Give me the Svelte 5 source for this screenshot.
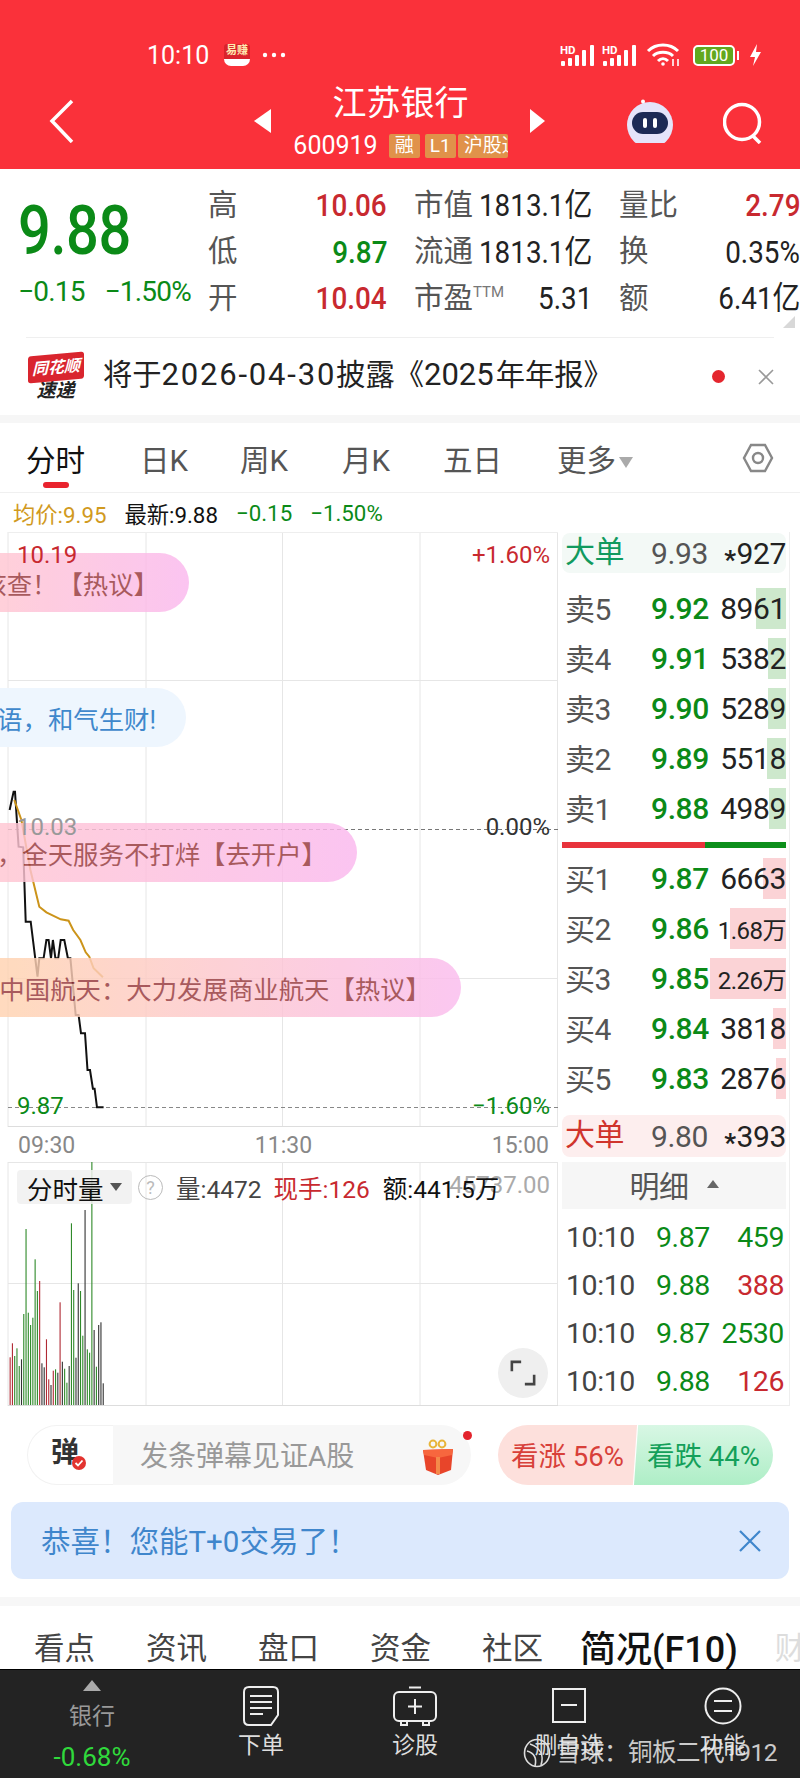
<script lang="ts">
  const stats = [
    { label: "高", value: "10.06", cls: "up" },
    { label: "市值", value: "1813.1亿", cls: "" },
    { label: "量比", value: "2.79", cls: "up" },
    { label: "低", value: "9.87", cls: "down" },
    { label: "流通", value: "1813.1亿", cls: "" },
    { label: "换", value: "0.35%", cls: "" },
    { label: "开", value: "10.04", cls: "up" },
    { label: "市盈", sup: "TTM", value: "5.31", cls: "" },
    { label: "额", value: "6.41亿", cls: "" },
  ];

  const sells = [
    { label: "卖5", price: "9.92", vol: "8961", bar: 30 },
    { label: "卖4", price: "9.91", vol: "5382", bar: 18 },
    { label: "卖3", price: "9.90", vol: "5289", bar: 18 },
    { label: "卖2", price: "9.89", vol: "5518", bar: 19 },
    { label: "卖1", price: "9.88", vol: "4989", bar: 17 },
  ];
  const buys = [
    { label: "买1", price: "9.87", vol: "6663", bar: 23 },
    { label: "买2", price: "9.86", vol: "1.68万", bar: 56, small: true },
    { label: "买3", price: "9.85", vol: "2.26万", bar: 76, small: true },
    { label: "买4", price: "9.84", vol: "3818", bar: 13 },
    { label: "买5", price: "9.83", vol: "2876", bar: 10 },
  ];
  const ticks = [
    { price: "9.87", vol: "459", cls: "down" },
    { price: "9.88", vol: "388", cls: "up" },
    { price: "9.87", vol: "2530", cls: "down" },
    { price: "9.88", vol: "126", cls: "up" },
  ];

  // screen coordinates of the intraday lines, the svg viewBox starts at y=532
  const priceLine =
    "9.6,810 13.6,791.7 15,791.7 18.6,846.7 23.2,847.3 25.7,921.7 30.7,921.7 37.5,976.7 39.3,958.3 43.6,958.3 46.4,940 48.6,940 51,958.3 52.9,940 55.4,958.3 58.2,958.3 60.7,940 64.3,940 67.9,958.3 70.4,958.3 75.7,1015 78.6,1015 81,1033.3 85,1033.3 87.5,1070 90,1070 92.9,1088.7 94.6,1088.7 97,1107.3 103.6,1107.3";
  const avgLine =
    "14.3,800 21.4,820 30.4,870 39.3,906.7 46.4,912.3 60.7,919.3 68.6,920.7 73.2,930 80.4,940 85.7,952.3 89.3,956.7 93.6,968.3 102.9,977.3";

  const gridX = [8, 146, 282.5, 420, 557.5];

  // r = red, g = green, d = dark
  const volBars: [number, string][] = [
    [47.7, "r"], [61.7, "r"], [49, "g"], [56.7, "g"], [39, "g"], [45.7, "d"], [91, "g"], [176, "g"],
    [92.3, "g"], [80, "g"], [87.3, "g"], [145.7, "g"], [114, "g"], [124, "r"], [41.7, "d"], [37.7, "d"],
    [65.7, "r"], [25.7, "r"], [20, "d"], [34.3, "r"], [35.7, "g"], [32.3, "d"], [102.7, "r"], [43.3, "d"],
    [36.3, "g"], [22.3, "g"], [39, "d"], [181.7, "g"], [115, "g"], [47.3, "d"], [121.7, "d"], [114, "g"],
    [69.3, "g"], [195, "d"], [55.7, "g"], [52.3, "g"], [243, "g"], [75, "d"], [38.3, "g"], [80, "d"],
    [82.7, "d"], [21.7, "d"],
  ];
  const barColor: Record<string, string> = { r: "#b02a34", g: "#2f8a2a", d: "#333" };

  const bottomTabs = ["看点", "资讯", "盘口", "资金", "社区"];
</script>

<div class="page">
  <header class="top">
    <div class="status">
      <span class="clock">10:10</span>
      <span class="app-icon"><span>易赚</span></span>
      <svg class="dots" width="24" height="6" viewBox="0 0 24 6" fill="#fff">
        <circle cx="3" cy="3" r="2.2" /><circle cx="12" cy="3" r="2.2" /><circle cx="21" cy="3" r="2.2" />
      </svg>
      <span class="status-right">
        {#each [0, 1] as s (s)}
          <svg class="signal" width="36" height="23" viewBox="0 0 36 23">
            <text x="0" y="10" font-size="11.5" font-weight="700" fill="#fff" font-family="Roboto">HD</text>
            <rect x="1" y="17" width="4" height="5" rx="1" fill="#fff" />
            <rect x="8" y="14" width="4" height="8" rx="1" fill="#fff" />
            <rect x="15" y="11" width="4" height="11" rx="1" fill="#fff" />
            <rect x="22" y="6" width="4" height="16" rx="1" fill="#fff" />
            <rect x="30" y="1" width="4" height="21" rx="1" fill="#fff" />
          </svg>
        {/each}
        <svg width="36" height="24" viewBox="0 0 36 24" fill="none" stroke="#fff" stroke-width="3" class="wifi">
          <path d="M2 8 C10 0 24 0 32 8" />
          <path d="M7 13 C12 8 22 8 27 13" />
          <path d="M12 18 C15 15 19 15 22 18" />
          <circle cx="17" cy="21" r="1.8" fill="#fff" stroke="none" />
          <path d="M27 23 V16 M32 16 V23" stroke-width="1.6" />
        </svg>
        <span class="battery">100</span>
        <svg width="13" height="22" viewBox="0 0 13 22" fill="#fff" class="bolt">
          <path d="M8 0 L1 13 L6 13 L4 22 L12 8 L7 8 Z" />
        </svg>
      </span>
    </div>
    <div class="nav">
      <div class="nav-left">
        <svg width="26" height="44" viewBox="0 0 26 44" fill="none" stroke="#fff" stroke-width="3.5">
          <path d="M23 2 L3 22 L23 43" />
        </svg>
      </div>
      <div class="nav-center">
        <span class="arrow-l"></span>
        <div class="stock">
          <div class="stock-name">江苏银行</div>
          <div class="stock-code">
            <span>600919</span>
            <span class="tag">融</span>
            <span class="tag">L1</span>
            <span class="tag tag-cut">沪股通</span>
          </div>
        </div>
        <span class="arrow-r"></span>
      </div>
      <div class="nav-right">
        <svg width="48" height="44" viewBox="0 0 48 44">
          <circle cx="17" cy="2.5" r="2" fill="#fff" />
          <path d="M17 3 L20 9" stroke="#fff" stroke-width="2" />
          <circle cx="24" cy="26" r="23" fill="#e4e4fa" />
          <rect x="6" y="13" width="36" height="22" rx="11" fill="#1c2a56" />
          <rect x="17" y="19" width="4" height="10" rx="2" fill="#fff" />
          <rect x="27" y="19" width="4" height="10" rx="2" fill="#fff" />
        </svg>
        <svg class="search" width="40" height="42" viewBox="0 0 40 42" fill="none" stroke="#fff" stroke-width="3.5">
          <circle cx="19" cy="20" r="17.5" />
          <path d="M30 34 L37 41" />
        </svg>
      </div>
    </div>
  </header>

  <section class="quote">
    <div class="quote-main">
      <div class="last">9.88</div>
      <div class="change"><span>−0.15</span><span>−1.50%</span></div>
    </div>
    <div class="stats">
      {#each stats as s (s.label)}
        <div class="stat">
          <span class="stat-label">{s.label}{#if s.sup}<sup>{s.sup}</sup>{/if}</span>
          <span class="stat-value {s.cls}">{s.value}</span>
        </div>
      {/each}
    </div>
    <span class="corner"></span>
  </section>

  <section class="news">
    <div class="news-logo">
      <span class="logo-top">同花顺</span>
      <span class="logo-bottom">速递</span>
    </div>
    <div class="news-text">将于<span class="news-date">2026-04-30</span>披露《<span class="news-num">2025</span>年年报》</div>
    <span class="news-dot"></span>
    <svg class="news-close" width="16" height="16" viewBox="0 0 16 16" stroke="#999" stroke-width="1.6">
      <path d="M1 1 L15 15 M15 1 L1 15" />
    </svg>
  </section>

  <nav class="periods">
    <span class="period active">分时</span>
    <span class="period">日K</span>
    <span class="period">周K</span>
    <span class="period">月K</span>
    <span class="period">五日</span>
    <span class="period more">更多<i></i></span>
    <svg class="hex" width="32" height="30" viewBox="0 0 32 30" fill="none" stroke="#888" stroke-width="2.4">
      <path d="M9 2 H23 L30 15 L23 28 H9 L2 15 Z" />
      <circle cx="16" cy="15" r="5" />
    </svg>
  </nav>

  <div class="legend">
    <span class="avg">均价:9.95</span>
    <span>最新:9.88</span>
    <span class="down">−0.15</span>
    <span class="down">−1.50%</span>
  </div>

  <div class="market">
    <div class="charts">
      <div class="price-chart">
        <svg width="558" height="595" viewBox="0 532 558 595" class="layer">
          {#each gridX as x (x)}
            <line x1={x} x2={x} y1="532" y2="1127" stroke="#e6e6e6" />
          {/each}
          <line x1="8" x2="558" y1="532.5" y2="532.5" stroke="#eee" />
          <line x1="8" x2="558" y1="680.5" y2="680.5" stroke="#e6e6e6" />
          <line x1="8" x2="558" y1="978.5" y2="978.5" stroke="#e6e6e6" />
          <line x1="8" x2="558" y1="1126.5" y2="1126.5" stroke="#ddd" />
          <line x1="8" x2="558" y1="829.5" y2="829.5" stroke="#777" stroke-dasharray="4 3" />
          <line x1="8" x2="558" y1="1107.5" y2="1107.5" stroke="#888" stroke-dasharray="4 3" />
          <polyline points={priceLine} fill="none" stroke="#111" stroke-width="2" />
          <polyline points={avgLine} fill="none" stroke="#cc941a" stroke-width="2" />
        </svg>

        <div class="bubble b1"><span>被核查！【热议】</span></div>
        <div class="bubble b2"><span>善语，和气生财!</span></div>
        <div class="bubble b3"><span>开户，全天服务不打烊【去开户】</span></div>
        <div class="bubble b4"><span>中国航天：大力发展商业航天【热议】</span></div>
        <span class="axis-l up first">10.19</span>
        <span class="axis-r up first">+1.60%</span>
        <span class="axis-l mid">10.03</span>
        <span class="axis-r zero">0.00%</span>
        <span class="axis-l down low">9.87</span>
        <span class="axis-r down low">−1.60%</span>
      </div>

      <div class="times"><span>09:30</span><span>11:30</span><span>15:00</span></div>

      <div class="vol-chart">
        <svg width="558" height="244" viewBox="0 1162 558 244" class="layer">
          {#each gridX as x (x)}
            <line x1={x} x2={x} y1="1162" y2="1406" stroke="#e6e6e6" />
          {/each}
          <line x1="8" x2="558" y1="1162.5" y2="1162.5" stroke="#e6e6e6" />
          <line x1="8" x2="558" y1="1283.5" y2="1283.5" stroke="#e6e6e6" />
          <line x1="8" x2="558" y1="1405.5" y2="1405.5" stroke="#ddd" />
          {#each volBars as [h, c], i (i)}
            <rect x={9.6 + i * 2.27} y={1405 - h} width="1.1" height={h} fill={barColor[c]} />
          {/each}
        </svg>
        <span class="vol-max">45737.00</span>
        <div class="vol-head">
          <span class="vol-chip">分时量<i></i></span>
          <span class="help">?</span>
          <span class="vol-a">量:4472</span>
          <span class="vol-b up">现手:126</span>
          <span class="vol-c">额:441.5万</span>
        </div>
        <div class="expand">
          <svg width="26" height="26" viewBox="0 0 28 28" fill="none" stroke="#444" stroke-width="2.8">
            <path d="M2 12 V2 H12 M26 16 V26 H16" />
          </svg>
        </div>
      </div>
    </div>

    <aside class="book">
      <div class="big big-green">
        <span class="big-label">大单</span><span class="big-price">9.93</span><span class="big-vol"><b>*</b>927</span>
      </div>
      <div class="levels sell">
        {#each sells as r (r.label)}
          <div class="level">
            <span class="fill" style="width: {r.bar}px"></span>
            <span class="level-label">{r.label}</span>
            <span class="level-price">{r.price}</span>
            <span class="level-vol">{r.vol}</span>
          </div>
        {/each}
      </div>
      <div class="ratio"><span></span></div>
      <div class="levels buy">
        {#each buys as r (r.label)}
          <div class="level">
            <span class="fill" style="width: {r.bar}px"></span>
            <span class="level-label">{r.label}</span>
            <span class="level-price">{r.price}</span>
            <span class="level-vol" class:small={r.small}>{r.vol}</span>
          </div>
        {/each}
      </div>
      <div class="big big-red">
        <span class="big-label">大单</span><span class="big-price">9.80</span><span class="big-vol"><b>*</b>393</span>
      </div>
      <div class="detail-head">明细<i></i></div>
      {#each ticks as t, i (i)}
        <div class="tick">
          <span class="tick-time">10:10</span>
          <span class="tick-price down">{t.price}</span>
          <span class="tick-vol {t.cls}">{t.vol}</span>
        </div>
      {/each}
    </aside>
  </div>

  <div class="danmaku">
    <div class="dm-box">
      <div class="dm-icon">弹<span class="dm-check">
        <svg width="14" height="14" viewBox="0 0 14 14" fill="none" stroke="#fff" stroke-width="1.8"><path d="M3.5 7 L6 9.5 L10.5 4.5" /></svg>
      </span></div>
      <div class="dm-input">
        <span>发条弹幕见证A股</span>
        <svg width="34" height="36" viewBox="0 0 34 36">
          <circle cx="12" cy="5" r="3.4" fill="none" stroke="#e8b53a" stroke-width="2" />
          <circle cx="21" cy="5" r="3.4" fill="none" stroke="#e8b53a" stroke-width="2" />
          <path d="M2 11 L32 10 L30 31 L17 36 L5 31 Z" fill="#e8452a" />
          <path d="M2 11 L32 10 L31 16 L17 19 L3 16 Z" fill="#f7673e" />
          <path d="M15 18 L19 18 L19 35 L15 35 Z" fill="#f48a4a" />
        </svg>
      </div>
      <span class="dm-dot"></span>
    </div>
    <div class="vote">
      <span class="vote-up">看涨 56%</span>
      <span class="vote-down">看跌 44%</span>
    </div>
  </div>

  <div class="banner">
    <span>恭喜！您能T+0交易了！</span>
    <svg width="22" height="22" viewBox="0 0 22 22" stroke="#3f86cc" stroke-width="2.2">
      <path d="M1 1 L21 21 M21 1 L1 21" />
    </svg>
  </div>

  <div class="band"></div>

  <nav class="f10">
    {#each bottomTabs as t (t)}
      <span class="f10-tab">{t}</span>
    {/each}
    <span class="f10-now">简况(F10)</span>
    <span class="f10-fade">财</span>
  </nav>

  <footer class="bar">
    <div class="bar-item sector">
      <i></i>
      <span class="sector-name">银行</span>
      <span class="sector-pct">-0.68%</span>
    </div>
    <div class="bar-item">
      <svg width="36" height="40" viewBox="0 0 36 40" fill="none" stroke="#eee" stroke-width="2">
        <path d="M6 1 H30 Q35 1 35 6 V29 L28 39 H6 Q1 39 1 34 V6 Q1 1 6 1 Z" />
        <path d="M7 10 H29 M7 16 H29 M7 22 H29 M7 28 H20" />
      </svg>
      <span>下单</span>
    </div>
    <div class="bar-item">
      <svg width="44" height="40" viewBox="0 0 44 40" fill="none" stroke="#eee" stroke-width="2">
        <path d="M16 1.5 H28" />
        <rect x="1" y="6" width="42" height="29" rx="5" />
        <path d="M22 13 V28 M15 20.5 H29 M8 36 V39 H14 V36 M30 36 V39 H36 V36" />
      </svg>
      <span>诊股</span>
    </div>
    <div class="bar-item">
      <svg width="36" height="40" viewBox="0 0 36 40" fill="none" stroke="#eee" stroke-width="2">
        <rect x="2" y="3" width="32" height="33" />
        <path d="M10 19 H26" />
      </svg>
      <span>删自选</span>
    </div>
    <div class="bar-item">
      <svg width="38" height="40" viewBox="0 0 38 40" fill="none" stroke="#eee" stroke-width="2">
        <circle cx="19" cy="20" r="17.5" />
        <path d="M10 15 H28 M10 25 H28" />
      </svg>
      <span>功能</span>
    </div>
    <div class="watermark">
      <svg width="28" height="30" viewBox="0 0 28 30" fill="none" stroke="#ddd" stroke-width="1.6">
        <ellipse cx="14" cy="15" rx="12.5" ry="13.5" />
        <path d="M7 6 C18 10 21 18 18 27 M4 13 C11 15 14 20 12 28" />
      </svg>
      <span>雪球：铜板二代1912</span>
    </div>
  </footer>
</div>

<style>
  :global(body) {
    margin: 0;
    background: #fff;
  }

  .page {
    width: 800px;
    height: 1778px;
    overflow: hidden;
    background: #fff;
    font-family: Roboto, "Noto Sans CJK SC", sans-serif;
    color: #222;
  }

  .up { color: #c8292f; }
  .down { color: #0b8a17; }

  /* header */
  .top {
    height: 169px;
    background: #fa313a;
    color: #fff;
  }

  .status {
    display: flex;
    align-items: center;
    height: 40px;
    padding: 35px 38px 0 147px;
  }

  .clock { font-size: 25px; width: 77px; }

  .app-icon {
    display: flex;
    width: 26px;
    height: 22px;
    border-radius: 3px 3px 7px 7px;
    background: linear-gradient(#d9232c 68%, #fff 68%);
    justify-content: center;
    font-size: 11px;
    line-height: 14px;
    font-weight: 700;
    color: #ffe9b0;
  }

  .dots { margin-left: 12px; }

  .status-right {
    display: flex;
    align-items: center;
    margin-left: auto;
    gap: 6px;
  }

  .wifi { margin-left: 2px; }

  .battery {
    position: relative;
    width: 38px;
    height: 17px;
    line-height: 17px;
    margin-left: 5px;
    border: 2px solid #fff;
    border-radius: 5px;
    background: #62a81e;
    font-size: 17px;
    text-align: center;
  }

  .battery::after {
    content: "";
    position: absolute;
    right: -6px;
    top: 4px;
    width: 2px;
    height: 9px;
    background: #fff;
  }

  .bolt { margin-left: 8px; }

  .nav {
    display: grid;
    grid-template-columns: 254px 291px 1fr;
    height: 94px;
    margin-top: -1px;
  }

  .nav-left {
    display: flex;
    align-items: center;
    padding-left: 49px;
  }

  .nav-center {
    display: flex;
    align-items: center;
    justify-content: space-between;
  }

  .arrow-l,
  .arrow-r {
    width: 0;
    height: 0;
    border-top: 12.5px solid transparent;
    border-bottom: 12.5px solid transparent;
  }
  .arrow-l { border-right: 17px solid #fff; }
  .arrow-r { border-left: 15px solid #fff; }

  .stock { text-align: center; }

  .stock-name {
    font-size: 34px;
    line-height: 38px;
    margin-top: -1px;
  }

  .stock-code {
    display: flex;
    align-items: center;
    gap: 5px;
    margin-top: 12px;
    font-size: 25px;
    line-height: 24px;
  }

  .stock-code > span:first-child { margin-right: 6px; }

  .tag {
    display: block;
    width: 31px;
    height: 24px;
    border-radius: 2px;
    background: #e0924a;
    font-size: 19px;
    text-align: center;
  }

  .tag-cut {
    width: 50px;
    margin-left: -3px;
    padding-left: 6px;
    box-sizing: border-box;
    overflow: hidden;
    white-space: nowrap;
    text-align: left;
  }

  .nav-right {
    display: flex;
    align-items: center;
    padding-left: 81px;
    gap: 49px;
  }

  .search { margin-top: 4px; }

  /* quote */
  .quote {
    position: relative;
    display: flex;
    height: 168px;
    box-sizing: border-box;
    padding: 13px 0 0 18px;
  }

  .quote-main { width: 191px; }

  .last {
    margin-top: 13px;
    font-size: 68px;
    line-height: 72px;
    font-weight: 500;
    color: #0b8a17;
    letter-spacing: -0.5px;
    transform: scaleX(0.85);
    transform-origin: left;
  }

  .change {
    display: flex;
    gap: 20px;
    margin-top: 9px;
    font-size: 28px;
    line-height: 32px;
    color: #0b8a17;
    letter-spacing: -0.8px;
  }

  .stats {
    display: grid;
    grid-template-columns: 178px 177px 180px;
    grid-auto-rows: 46.5px;
    column-gap: 28px;
  }

  .stat {
    display: flex;
    align-items: center;
    justify-content: space-between;
    white-space: nowrap;
  }

  .stat-label {
    margin-bottom: 7px;
    margin-left: -1px;
    font-size: 29.5px;
    color: #555;
  }

  .stat-label sup {
    font-size: 15px;
    line-height: 0;
    vertical-align: 11px;
    color: #777;
  }

  .stat-value {
    margin-left: -30px;
    font-size: 32px;
    line-height: 40px;
    transform: scaleX(0.87);
    transform-origin: right;
  }

  .stat-value.up,
  .stat-value.down { font-weight: 500; }

  .stat-value:not(.up):not(.down) { color: #222; }

  .corner {
    position: absolute;
    right: 5px;
    bottom: 9px;
    width: 0;
    height: 0;
    border-left: 12px solid transparent;
    border-bottom: 12px solid #d8d8d8;
  }

  /* news line */
  .news {
    display: flex;
    align-items: center;
    height: 78px;
    margin: 0 26px;
    border-top: 1px solid #efefef;
    box-sizing: border-box;
  }

  .news-logo {
    display: flex;
    flex-direction: column;
    align-items: center;
    width: 57px;
    margin-left: 1px;
    font-style: italic;
    font-weight: 700;
  }

  .logo-top {
    width: 56px;
    height: 27px;
    line-height: 27px;
    border-radius: 3px;
    background: #d9252e;
    color: #fff;
    font-size: 16px;
    text-align: center;
    transform: skewY(-5deg);
  }

  .logo-bottom {
    height: 18px;
    line-height: 18px;
    margin-top: 1px;
    font-size: 19px;
    color: #222;
  }

  .news-text {
    margin-left: 19px;
    font-size: 29.3px;
    line-height: 36px;
    margin-bottom: 4px;
    color: #222;
    white-space: nowrap;
  }

  .news-date {
    font-size: 31px;
    letter-spacing: 1.8px;
  }

  .news-num {
    font-size: 31px;
    letter-spacing: 0;
    margin-right: 2px;
  }

  .news-dot {
    width: 13px;
    height: 13px;
    margin-left: auto;
    border-radius: 50%;
    background: #e4262e;
  }

  .news-close { margin: 0 0 0 33px; }

  /* period tabs */
  .periods {
    position: relative;
    display: grid;
    grid-template-columns: 114px 100px 102px 101px 114px auto;
    align-items: center;
    height: 78px;
    padding-left: 26px;
    box-sizing: border-box;
    border-top: 8px solid #f6f6f6;
    border-bottom: 1px solid #f0f0f0;
    color: #555;
    font-size: 29.5px;
  }

  .period { position: relative; white-space: nowrap; }

  .active { color: #111; }

  .active::after {
    content: "";
    position: absolute;
    left: 17px;
    top: 45px;
    width: 26px;
    height: 6px;
    border-radius: 3px;
    background: #e9232e;
  }

  .more i {
    display: inline-block;
    width: 0;
    height: 0;
    margin-left: 3px;
    vertical-align: 3px;
    border-left: 7px solid transparent;
    border-right: 7px solid transparent;
    border-top: 11px solid #aaa;
  }

  .hex {
    position: absolute;
    right: 26px;
    top: 20px;
  }

  .legend {
    display: flex;
    align-items: center;
    gap: 18px;
    height: 39px;
    padding-left: 13px;
    font-size: 22.3px;
    color: #111;
  }

  .avg { color: #d19a1e; }

  /* charts */
  .market {
    display: flex;
    height: 874px;
  }

  .charts { width: 558px; }

  .price-chart,
  .vol-chart {
    position: relative;
    overflow: hidden;
  }

  .price-chart { height: 595px; }
  .vol-chart { height: 244px; }

  .layer {
    position: absolute;
    left: 0;
    top: 0;
  }

  .axis-l,
  .axis-r {
    position: absolute;
    font-size: 24px;
    line-height: 24px;
  }

  .axis-l { left: 17px; }
  .axis-r { right: 8px; }

  .first { top: 11px; }
  .mid { top: 283px; color: #999; }
  .zero { top: 283px; color: #333; }
  .low { top: 562px; }

  .bubble {
    position: absolute;
    left: 0;
    display: flex;
    justify-content: flex-end;
    align-items: center;
    height: 59px;
    box-sizing: border-box;
    padding-right: 30px;
    border-radius: 0 30px 30px 0;
    overflow: hidden;
    white-space: nowrap;
    font-size: 25.4px;
    color: #96363a;
    background: linear-gradient(90deg, #ffc6d2, #fbb8ee);
    opacity: 0.82;
  }

  .b1 { top: 21px; width: 189px; }
  .b2 {
    top: 156px;
    width: 186px;
    background: #eef6fe;
    color: #3f88cc;
    opacity: 1;
  }
  .b3 { top: 291px; width: 357px; }
  .b4 {
    top: 426px;
    width: 461px;
    background: linear-gradient(90deg, #ffd3b0, #fbbcee);
  }

  .times {
    display: flex;
    justify-content: space-between;
    align-items: center;
    height: 35px;
    padding: 2px 9px 0 18px;
    box-sizing: border-box;
    font-size: 23px;
    color: #888;
  }

  .vol-max {
    position: absolute;
    right: 8px;
    top: 9px;
    font-size: 24px;
    color: #aaa;
  }

  .vol-head {
    position: absolute;
    left: 17px;
    top: 8px;
    display: flex;
    align-items: center;
    height: 34px;
    font-size: 24.5px;
    white-space: nowrap;
    color: #222;
  }

  .vol-chip {
    display: flex;
    align-items: center;
    width: 115px;
    height: 34px;
    box-sizing: border-box;
    padding-left: 10px;
    border-radius: 4px;
    background: rgba(240, 240, 240, 0.85);
    font-size: 25.5px;
    color: #111;
  }

  .vol-chip i {
    width: 0;
    height: 0;
    margin-left: 6px;
    border-left: 6px solid transparent;
    border-right: 6px solid transparent;
    border-top: 8px solid #555;
  }

  .help {
    width: 23px;
    height: 23px;
    line-height: 23px;
    margin-left: 6px;
    border: 1.5px solid #bbb;
    border-radius: 50%;
    font-size: 18px;
    color: #bbb;
    text-align: center;
  }

  .vol-a { margin-left: 13px; color: #444; }
  .vol-b { margin-left: 12px; }
  .vol-c { margin-left: 13px; color: #111; }

  .expand {
    position: absolute;
    left: 498px;
    top: 186px;
    display: flex;
    align-items: center;
    justify-content: center;
    width: 50px;
    height: 50px;
    border-radius: 50%;
    background: #efefef;
  }

  /* order book */
  .book {
    width: 232px;
    height: 874px;
    box-sizing: border-box;
    padding: 1px 3px 0 4px;
    border-right: 1px solid #eee;
    border-bottom: 1px solid #eee;
    font-size: 30px;
    letter-spacing: -0.4px;
  }

  .big {
    display: flex;
    align-items: center;
    height: 40px;
    padding: 0 0 0 3px;
    border-radius: 8px;
  }

  .big-green { background: #f3f9f6; }
  .big-green .big-label { color: #119a5e; }
  .big-red {
    height: 42px;
    margin-top: 12px;
    background: #fdeeee;
  }
  .big-red .big-label { color: #d0342c; }

  .big-label {
    width: 86px;
    font-size: 30px;
    line-height: 36px;
    margin-bottom: 3px;
  }

  .big-price {
    width: 61px;
    color: #555;
  }

  .big-vol {
    flex: 1;
    text-align: right;
    color: #222;
  }

  .big-vol b {
    position: relative;
    top: 5px;
    margin-right: 1px;
    font-size: 26px;
  }

  .levels { margin-top: 10px; }
  .levels.buy { margin-top: 5px; }

  .level {
    position: relative;
    display: flex;
    align-items: center;
    height: 50px;
    padding-left: 3px;
  }

  .fill {
    position: absolute;
    right: 0;
    top: 4.5px;
    height: 41px;
  }

  .sell .fill { background: #cde8cc; }
  .buy .fill { background: #fbd3d6; }

  .level > span:not(.fill) { position: relative; }

  .level-label {
    width: 86px;
    margin-bottom: 2px;
    font-size: 30px;
    color: #555;
  }

  .level-price {
    width: 61px;
    color: #0b8a17;
    font-weight: 500;
  }

  .level-vol {
    flex: 1;
    text-align: right;
    color: #222;
  }

  .level-vol.small {
    font-size: 24px;
    letter-spacing: -0.5px;
  }

  .ratio {
    height: 6px;
    margin-top: 9px;
    background: #0d8f1b;
  }

  .ratio span {
    display: block;
    width: 143px;
    height: 6px;
    background: #e8333c;
  }

  .detail-head {
    display: flex;
    align-items: center;
    justify-content: center;
    height: 47px;
    box-sizing: border-box;
    padding-bottom: 4px;
    margin: 5px 0 4.5px;
    background: #f6f6f6;
    font-size: 30px;
    color: #555;
  }

  .detail-head i {
    width: 0;
    height: 0;
    margin-left: 18px;
    border-left: 6px solid transparent;
    border-right: 6px solid transparent;
    border-bottom: 8px solid #666;
  }

  .tick {
    display: flex;
    align-items: center;
    height: 48px;
    padding: 0 2px 0 4px;
    font-size: 28.5px;
  }

  .tick-time { width: 90px; color: #444; }
  .tick-price { width: 55px; }
  .tick-vol { flex: 1; text-align: right; }

  /* danmaku and vote */
  .danmaku {
    display: flex;
    height: 95px;
    box-sizing: border-box;
    padding: 19px 0 0 27px;
  }

  .dm-box {
    position: relative;
    display: flex;
    width: 444px;
    height: 60px;
  }

  .dm-icon {
    position: relative;
    width: 86px;
    box-sizing: border-box;
    padding-left: 23px;
    border: 1px solid #f2f2f2;
    border-right: 0;
    border-radius: 30px 0 0 30px;
    font-size: 28px;
    line-height: 54px;
    font-weight: 700;
    color: #333;
  }

  .dm-check {
    position: absolute;
    left: 44px;
    top: 30px;
    display: flex;
    width: 14px;
    height: 14px;
    border-radius: 50%;
    background: #e3332f;
  }

  .dm-input {
    display: flex;
    align-items: center;
    justify-content: space-between;
    flex: 1;
    padding: 0 16px 3px 27px;
    border-radius: 0 30px 30px 0;
    background: #f7f7f7;
    font-size: 28px;
    color: #999;
    white-space: nowrap;
  }

  .dm-input svg { margin-top: 6px; }

  .dm-dot {
    position: absolute;
    right: -1px;
    top: 6px;
    width: 9px;
    height: 9px;
    border-radius: 50%;
    background: #e3232c;
  }

  .vote {
    display: flex;
    width: 275px;
    height: 60px;
    margin-left: 27px;
    font-size: 27.5px;
    white-space: nowrap;
  }

  .vote span {
    display: flex;
    align-items: center;
    height: 60px;
    box-sizing: border-box;
    padding-bottom: 3px;
  }

  .vote-up {
    width: 139px;
    padding-left: 13px;
    border-radius: 30px 0 0 30px;
    background: #fde0dc;
    color: #d8403a;
    clip-path: polygon(0 0, 100% 0, 97% 100%, 0 100%);
  }

  .vote-down {
    width: 139px;
    margin-left: -3px;
    padding-left: 13px;
    border-radius: 0 30px 30px 0;
    background: linear-gradient(#d8f7e4, #aeeec6);
    color: #14a05a;
    clip-path: polygon(3% 0, 100% 0, 100% 100%, 0 100%);
  }

  .banner {
    display: flex;
    align-items: center;
    justify-content: space-between;
    height: 77px;
    margin: 1px 11px 0;
    padding: 0 28px 3px 30px;
    box-sizing: border-box;
    border-radius: 12px;
    background: #dce9fd;
    font-size: 29.5px;
    color: #3f86cc;
  }

  .banner svg { margin-top: 3px; }

  .band {
    height: 9px;
    margin-top: 18px;
    background: #f7f7f7;
  }

  .f10 {
    display: flex;
    align-items: center;
    height: 63px;
    box-sizing: border-box;
    padding: 16px 0 0 34px;
    overflow: hidden;
    white-space: nowrap;
    font-size: 30.5px;
    color: #444;
  }

  .f10-tab { width: 112px; flex: none; }

  .f10-now {
    flex: none;
    margin-left: -14px;
    font-size: 36px;
    font-weight: 500;
    color: #111;
  }

  .f10-fade {
    flex: none;
    margin-left: 37px;
    color: #ddd;
  }

  /* bottom bar */
  .bar {
    position: relative;
    display: grid;
    grid-template-columns: 184px 154px 154px 154px 154px;
    height: 110px;
    background: #232323;
    border-top: 1px solid #000;
    box-sizing: border-box;
    color: #ddd;
    font-size: 23px;
  }

  .bar-item {
    display: flex;
    flex-direction: column;
    align-items: center;
    padding-top: 16px;
  }

  .bar-item > span { white-space: nowrap; }

  .sector { padding-top: 10px; }

  .sector i {
    width: 0;
    height: 0;
    border-left: 9px solid transparent;
    border-right: 9px solid transparent;
    border-bottom: 11px solid #aaa;
  }

  .sector-name {
    margin-top: 6px;
    color: #999;
  }

  .sector-pct {
    margin-top: 11px;
    font-size: 26px;
    color: #30d93c;
  }

  .watermark {
    position: absolute;
    left: 523px;
    top: 65px;
    display: flex;
    align-items: center;
    gap: 5px;
    font-size: 24.5px;
    letter-spacing: -0.5px;
    line-height: 36px;
    color: rgba(235, 235, 235, 0.85);
    white-space: nowrap;
  }
</style>
